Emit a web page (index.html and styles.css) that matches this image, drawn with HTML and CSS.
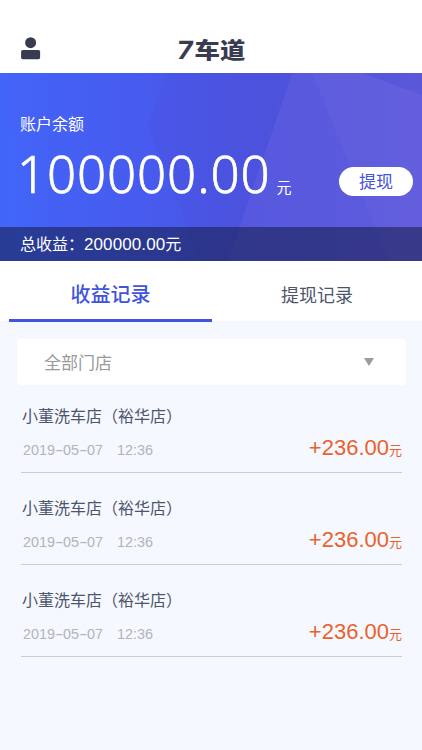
FILE: index.html
```html
<!DOCTYPE html>
<html lang="zh-CN">
<head>
    <meta charset="UTF-8">
    <meta name="viewport" content="width=device-width, initial-scale=1.0">
    <title>7车道</title>
    <link rel="stylesheet" href="styles.css">
</head>
<body>

<header class="header">
    <svg class="user-icon" width="20" height="23" viewBox="0 0 20 23">
        <circle cx="9.6" cy="5.7" r="5.5"/>
        <rect x="0.1" y="13" width="19" height="9.2" rx="1.6"/>
    </svg>
    <h1 class="logo"><span class="logo-num">7</span><span class="logo-text">车道</span></h1>
</header>

<section class="banner">
    <svg class="banner-bg" viewBox="0 0 422 188" preserveAspectRatio="none">
        <defs>
            <linearGradient id="base" x1="0" y1="0" x2="1" y2="0">
                <stop offset="0" stop-color="#4364f8"/>
                <stop offset="0.35" stop-color="#475bee"/>
                <stop offset="0.6" stop-color="#4c54df"/>
                <stop offset="1" stop-color="#5b58d9"/>
            </linearGradient>
        </defs>
        <rect width="422" height="188" fill="url(#base)"/>
        <polygon points="168,0 292,0 228,188 200,188 148,52" fill="#4a4dd8" fill-opacity="0.25"/>
        <polygon points="0,0 52,188 0,188" fill="#4068ff" fill-opacity="0.2"/>
        <polygon points="292,0 312,0 388,188 228,188" fill="#6460e0" fill-opacity="0.45"/>
        <polygon points="312,0 362,0 422,22 422,188 388,188" fill="#6c66e0" fill-opacity="0.5"/>
    </svg>
    <div class="balance">
        <p class="balance-label">账户余额</p>
        <div class="balance-row">
            <p class="balance-num">100000.00<span class="unit">元</span></p>
            <button class="withdraw" type="button">提现</button>
        </div>
    </div>
    <p class="total">总收益：<span class="total-num">200000.00</span>元</p>
</section>

<nav class="tabs">
    <a class="tab active">收益记录</a>
    <a class="tab">提现记录</a>
</nav>

<main class="content">
    <div class="filter">
        <span>全部门店</span>
        <i class="arrow"></i>
    </div>

    <ul class="records">
        <li class="record">
            <h2>小董洗车店（裕华店）</h2>
            <div class="record-row">
                <p class="time"><span>2019<i>-</i>05<i>-</i>07</span><span>12:36</span></p>
                <p class="amount">+236.00<span>元</span></p>
            </div>
        </li>
        <li class="record">
            <h2>小董洗车店（裕华店）</h2>
            <div class="record-row">
                <p class="time"><span>2019<i>-</i>05<i>-</i>07</span><span>12:36</span></p>
                <p class="amount">+236.00<span>元</span></p>
            </div>
        </li>
        <li class="record">
            <h2>小董洗车店（裕华店）</h2>
            <div class="record-row">
                <p class="time"><span>2019<i>-</i>05<i>-</i>07</span><span>12:36</span></p>
                <p class="amount">+236.00<span>元</span></p>
            </div>
        </li>
    </ul>
</main>

</body>
</html>
```
FILE: styles.css
```css
* { box-sizing: border-box; margin: 0; padding: 0; }
body { font-family: "Noto Sans CJK SC", sans-serif; background-color: #f5f8ff; color: #4d556b; min-height: 750px; }

/* header */
.header {
    display: grid;
    grid-template-columns: 60px 1fr 60px;
    height: 73px;
    padding-top: 27px;
    align-items: center;
    background: #fff;
}
.user-icon { margin-left: 21px; margin-top: -4px; fill: #393c50; }
.logo { display: flex; justify-content: center; font-size: 24px; line-height: 30px; font-weight: 900; color: #393c50; }
.logo-num { font-family: Inter, sans-serif; font-size: 25px; font-weight: 700; transform: scaleX(1.1) skewX(-6deg); margin-right: 3px; }
.logo-text { transform: scale(1.06, 0.9) translateY(-1px); }

/* balance */
.banner { position: relative; height: 188px; display: flex; flex-direction: column; color: #fff; }
.banner-bg { position: absolute; left: 0; top: 0; width: 100%; height: 100%; z-index: -1; }
.balance { flex: 1; padding: 38px 9px 0 20px; }
.balance-label { font-size: 16px; line-height: 24px; }
.balance-row { display: flex; justify-content: space-between; align-items: flex-start; padding-top: 5px; }
.balance-num { font-family: "Noto Sans", sans-serif; font-size: 51px; font-weight: 300; line-height: 60px; padding-top: 3px; margin-left: -3px; letter-spacing: 0.9px; -webkit-text-stroke: 0.7px #fff; }
.unit { font-family: "Noto Sans CJK SC", sans-serif; font-size: 15px; line-height: 1; font-weight: 400; margin-left: 6px; -webkit-text-stroke: 0; }
.withdraw {
    width: 74px;
    height: 29px;
    margin-top: 27px;
    border: none;
    border-radius: 15px;
    background: #fff;
    color: #4654da;
    font: 17px/27px "Noto Sans CJK SC", sans-serif;
    padding-bottom: 2px;
}
.total { height: 34px; padding-left: 20px; font-size: 16px; line-height: 32px; background: rgba(20, 27, 70, 0.55); }
.total-num { font-family: "Liberation Sans", sans-serif; font-size: 17px; letter-spacing: 0.1px; }

/* tabs */
.tabs { display: flex; height: 60px; padding-left: 9px; background: #fff; }
.tab { flex: 1; text-align: center; font-size: 18px; line-height: 66px; }
.tab.active { flex: 0 0 203px; font-size: 20px; font-weight: 500; line-height: 66px; color: #4054dc; height: 61px; border-bottom: 3px solid #4054dc; }

/* filter */
.content { padding: 18px 16px 0 17px; }
.filter {
    display: flex;
    align-items: center;
    justify-content: space-between;
    height: 46px;
    padding: 0 32px 0 27px;
    border-radius: 4px;
    background: #fff;
    font-size: 17px;
    line-height: 24px;
    color: #999a9e;
}
.filter span { margin-top: -1px; }
.arrow { border: 5px solid transparent; border-top: 8px solid #999ca3; border-bottom: 0; }

/* records */
.records { list-style: none; padding: 0 4px; margin-top: -4px; }
.record { height: 92px; padding-top: 22px; border-bottom: 1px solid #c9ccd4; }
.record h2 { padding-left: 1px; font-size: 16px; font-weight: 400; line-height: 24px; }
.record-row { display: flex; justify-content: space-between; align-items: center; height: 42px; }
.time { display: flex; gap: 14px; padding: 3px 0 0 2px; font-family: "Liberation Sans", sans-serif; font-size: 14.4px; color: #b2b4b8; }
.time i { display: inline-block; font-style: normal; margin: 0 1.6px; transform: scaleX(1.8); }
.amount { font-family: "Liberation Sans", sans-serif; font-size: 22px; line-height: 32px; color: #e9622c; }
.amount span { font-family: "Noto Sans CJK SC", sans-serif; font-size: 13px; line-height: 1; }
```
